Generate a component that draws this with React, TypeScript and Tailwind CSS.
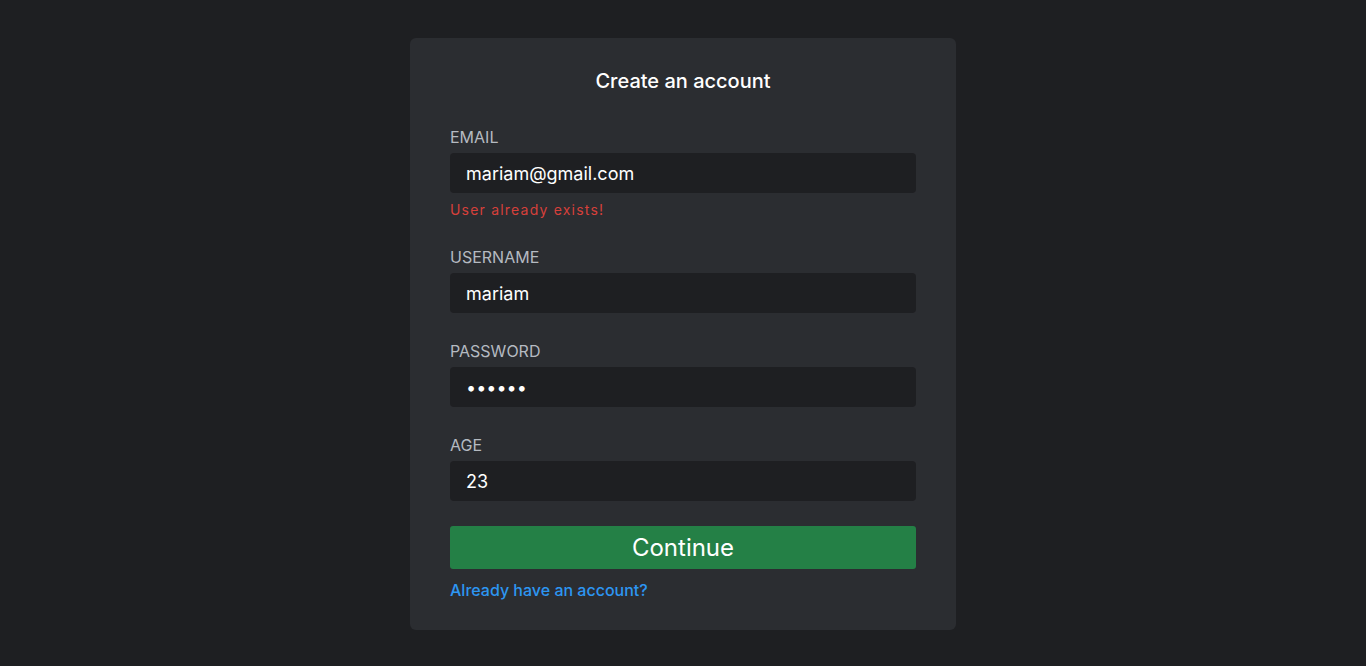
import { useState } from 'react'

type FieldProps = {
  label: string
  value: string
  type?: string
  error?: string
  onChange: (v: string) => void
}

function Field({ label, value, type = 'text', error, onChange }: FieldProps) {
  return (
    <div className="flex flex-col">
      <label className="text-[16px] leading-[20px] text-[#b5bac1] mb-[6px]">{label}</label>
      <input
        type={type}
        value={value}
        onChange={(e) => onChange(e.target.value)}
        className="h-[40px] w-full rounded-[4px] bg-[#1e1f22] px-4 text-[18px] text-white outline-none"
      />
      {error && (
        <span className="mt-[7px] text-[14px] leading-[19px] tracking-[1.2px] text-[#d6403b]">{error}</span>
      )}
    </div>
  )
}

export default function App() {
  const [email, setEmail] = useState('mariam@gmail.com')
  const [username, setUsername] = useState('mariam')
  const [password, setPassword] = useState('123456')
  const [age, setAge] = useState('23')

  return (
    <div
      className="flex min-h-[666px] w-full justify-center bg-[#1e1f22] pt-[38px]"
      style={{ fontFamily: 'Inter, "Noto Sans", sans-serif' }}
    >
      <div className="flex h-[592px] w-[546px] flex-col rounded-[6px] bg-[#2b2d31] px-10 pt-[29px]">
        <h1 className="text-center text-[20px] font-medium leading-[28px] text-white">Create an account</h1>

        <div className="mt-[32px] flex flex-col gap-[28px]">
          <Field label="EMAIL" value={email} onChange={setEmail} error="User already exists!" />
          <Field label="USERNAME" value={username} onChange={setUsername} />
          <Field label="PASSWORD" type="password" value={password} onChange={setPassword} />
          <Field label="AGE" value={age} onChange={setAge} />
        </div>

        <button className="mt-[25px] h-[43px] w-full rounded-[3px] bg-[#248046] text-[24px] font-normal text-white">
          Continue
        </button>
        <a href="#" className="mt-[11px] text-[16px] font-medium leading-[20px] text-[#2d96f2]">
          Already have an account?
        </a>
      </div>
    </div>
  )
}
